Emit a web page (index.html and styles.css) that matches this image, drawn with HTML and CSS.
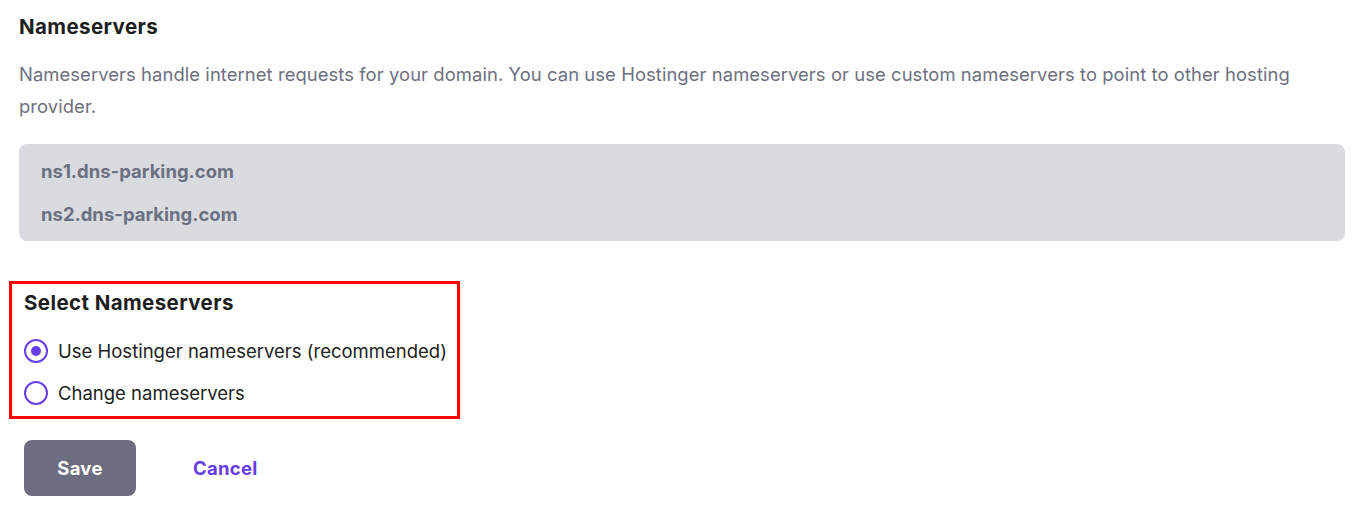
FILE: index.html
```html
<!DOCTYPE html>
<html>
<head>
<meta charset="utf-8">
<link rel="stylesheet" href="styles.css">
</head>
<body>
<div class="page">
  <h2 class="title">Nameservers</h2>
  <p class="desc">Nameservers handle internet requests for your domain. You can use Hostinger nameservers or use custom nameservers to point to other hosting provider.</p>
  <div class="ns-box">
    <div class="ns">ns1.dns-parking.com</div>
    <div class="ns">ns2.dns-parking.com</div>
  </div>
  <div class="select-box">
    <h3 class="sub">Select Nameservers</h3>
    <label class="radio"><span class="dot checked"></span><span>Use Hostinger nameservers (recommended)</span></label>
    <label class="radio"><span class="dot"></span><span>Change nameservers</span></label>
  </div>
  <div class="actions">
    <button class="btn-save">Save</button>
    <button class="btn-cancel">Cancel</button>
  </div>
</div>
</body>
</html>
```
FILE: styles.css
```css
* { box-sizing: border-box; }
body {
  margin: 0;
  background: #fff;
  font-family: Inter, "Noto Sans", sans-serif;
  color: #1d1e20;
}
.page {
  padding: 14px 21px 0 19px;
}
.title {
  margin: 0;
  font-size: 20.5px;
  font-weight: 700;
  letter-spacing: 0.4px;
  line-height: 26px;
  color: #1d1e20;
}
.desc {
  margin: 18px 0 0;
  font-size: 18.4px;
  letter-spacing: 0.08px;
  line-height: 32px;
  color: #6d7081;
}
.ns-box {
  margin-top: 22px;
  background: #dadbe0;
  border-radius: 8px;
  padding: 15px 22px 15px;
  display: flex;
  flex-direction: column;
  gap: 19px;
}
.ns {
  font-size: 18.5px;
  font-weight: 700;
  line-height: 24px;
  color: #6d7081;
}
.select-box {
  margin-top: 40px;
  margin-left: -10px;
  width: 451px;
  border: 3px solid #ff0000;
  padding: 5px 0 0 12px;
  height: 138px;
}
.sub {
  margin: 0;
  font-size: 20.5px;
  font-weight: 700;
  letter-spacing: 0.4px;
  line-height: 28px;
  color: #1d1e20;
}
.radio {
  display: flex;
  align-items: center;
  gap: 10px;
  font-size: 18.5px;
  line-height: 28px;
  color: #1d1e20;
}
.sub + .radio { margin-top: 20px; }
.radio + .radio { margin-top: 14px; }
.dot {
  width: 24px;
  height: 24px;
  border-radius: 50%;
  border: 2.5px solid #673de6;
  display: flex;
  align-items: center;
  justify-content: center;
  flex: none;
}
.dot.checked::after {
  content: "";
  width: 10px;
  height: 10px;
  border-radius: 50%;
  background: #673de6;
}
.actions {
  margin-top: 21px;
  margin-left: 5px;
  display: flex;
  align-items: center;
  gap: 32px;
}
.btn-save {
  width: 112px;
  height: 56px;
  border: none;
  border-radius: 8px;
  background: #6d6d80;
  color: #fff;
  font-family: inherit;
  font-size: 18.5px;
  font-weight: 700;
  letter-spacing: 0.3px;
}
.btn-cancel {
  border: none;
  background: none;
  color: #673de6;
  font-family: inherit;
  font-size: 18.5px;
  font-weight: 700;
  letter-spacing: 0.3px;
  padding: 12px 25px;
}
```
